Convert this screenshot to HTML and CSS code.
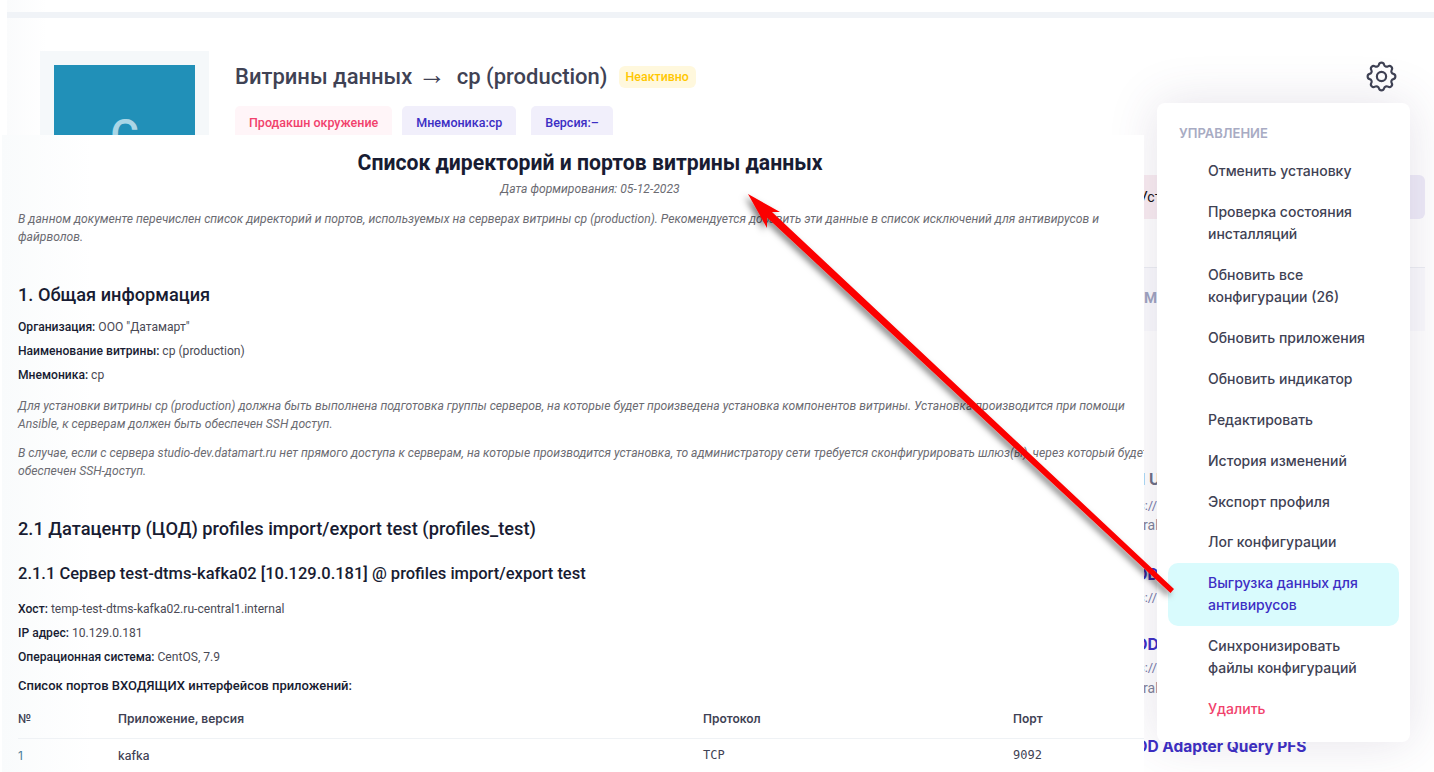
FILE: index.html
```html
<!DOCTYPE html>
<html lang="ru">
<head>
<meta charset="utf-8">
<title>Витрины данных</title>
<link rel="stylesheet" href="styles.css">
</head>
<body>
<div class="app">
  <div class="band"></div>
  <header class="hero">
    <div class="logo"><div class="logo-box">C</div></div>
    <div class="info">
      <div class="title-row">
        <h1 class="title">Витрины данных <span class="arrow-glyph">→</span>&nbsp; cp (production)</h1>
        <span class="badge">Неактивно</span>
      </div>
      <div class="chips">
        <span class="chip chip-red">Продакшн окружение</span>
        <span class="chip chip-blue">Мнемоника:cp</span>
        <span class="chip chip-blue chip-gap">Версия:–</span>
      </div>
      <div class="actions">
        <span class="action action-red">Установить</span>
        <span class="action action-purple"></span>
      </div>
    </div>
    <svg class="gear" viewBox="0 0 24 24" fill="none" stroke="#3f4254" stroke-width="1.4" stroke-linecap="round" stroke-linejoin="round">
      <path d="M10.325 4.317c.426-1.756 2.924-1.756 3.35 0a1.724 1.724 0 0 0 2.573 1.066c1.543-.94 3.31.826 2.37 2.37a1.724 1.724 0 0 0 1.065 2.572c1.756.426 1.756 2.924 0 3.35a1.724 1.724 0 0 0-1.066 2.573c.94 1.543-.826 3.31-2.37 2.37a1.724 1.724 0 0 0-2.572 1.065c-.426 1.756-2.924 1.756-3.35 0a1.724 1.724 0 0 0-2.573-1.066c-1.543.94-3.31-.826-2.37-2.37a1.724 1.724 0 0 0-1.065-2.572c-1.756-.426-1.756-2.924 0-3.35a1.724 1.724 0 0 0 1.066-2.573c-.94-1.543.826-3.31 2.37-2.37c1 .608 2.296.07 2.572-1.065z"/>
      <circle cx="12" cy="12" r="3"/>
    </svg>
  </header>
  <div class="tabs"><span class="tab">Мониторинг</span></div>
  <section class="services">
    <div class="service service-first">
      <div class="svc-name svc-dark">ADM UI</div>
      <div class="svc-url">https://studio-dev.datamart.ru</div>
      <div class="svc-host">central1.internal</div>
    </div>
    <div class="service service-second">
      <div class="svc-name">MOD Adapter</div>
      <div class="svc-url">https://studio-dev.datamart.ru</div>
    </div>
    <div class="service service-third">
      <div class="svc-name">MOD Adapter Kafka</div>
      <div class="svc-url">https://studio-dev.datamart.ru</div>
      <div class="svc-host">central1.internal</div>
    </div>
    <div class="service service-last">
      <div class="svc-name">MOD Adapter Query PFS</div>
    </div>
  </section>
</div>

<nav class="menu">
  <div class="menu-heading">УПРАВЛЕНИЕ</div>
  <a class="menu-item">Отменить установку</a>
  <a class="menu-item">Проверка состояния инсталляций</a>
  <a class="menu-item">Обновить все конфигурации (26)</a>
  <a class="menu-item">Обновить приложения</a>
  <a class="menu-item">Обновить индикатор</a>
  <a class="menu-item">Редактировать</a>
  <a class="menu-item">История изменений</a>
  <a class="menu-item">Экспорт профиля</a>
  <a class="menu-item">Лог конфигурации</a>
  <a class="menu-item menu-item-active">Выгрузка данных для антивирусов</a>
  <a class="menu-item">Синхронизировать файлы конфигураций</a>
  <a class="menu-item menu-item-danger">Удалить</a>
</nav>

<article class="doc">
  <h2 class="doc-title">Список директорий и портов витрины данных</h2>
  <p class="doc-date">Дата формирования: 05-12-2023</p>
  <p class="note note-intro">В данном документе перечислен список директорий и портов, используемых на серверах витрины cp (production). Рекомендуется добавить эти данные в список исключений для антивирусов и<br>файрволов.</p>
  <h3 class="h-section">1. Общая информация</h3>
  <p class="field field-first"><b>Организация:</b> ООО "Датамарт"</p>
  <p class="field"><b>Наименование витрины:</b> cp (production)</p>
  <p class="field"><b>Мнемоника:</b> cp</p>
  <p class="note note-a">Для установки витрины cp (production) должна быть выполнена подготовка группы серверов, на которые будет произведена установка компонентов витрины. Установка производится при помощи<br>Ansible, к серверам должен быть обеспечен SSH доступ.</p>
  <p class="note note-b">В случае, если с сервера studio-dev.datamart.ru нет прямого доступа к серверам, на которые производится установка, то администратору сети требуется сконфигурировать шлюз(ы), через который будет<br>обеспечен SSH-доступ.</p>
  <h3 class="h-dc">2.1 Датацентр (ЦОД) profiles import/export test (profiles_test)</h3>
  <h4 class="h-server">2.1.1 Сервер test-dtms-kafka02 [10.129.0.181] @ profiles import/export test</h4>
  <p class="field field-host"><b>Хост:</b> temp-test-dtms-kafka02.ru-central1.internal</p>
  <p class="field"><b>IP адрес:</b> 10.129.0.181</p>
  <p class="field"><b>Операционная система:</b> CentOS, 7.9</p>
  <p class="list-title">Список портов ВХОДЯЩИХ интерфейсов приложений:</p>
  <table class="ports">
    <thead>
      <tr><th class="col-n">№</th><th class="col-app">Приложение, версия</th><th class="col-proto">Протокол</th><th>Порт</th></tr>
    </thead>
    <tbody>
      <tr><td class="cell-n">1</td><td class="cell-app">kafka</td><td class="cell-mono">TCP</td><td class="cell-mono">9092</td></tr>
    </tbody>
  </table>
</article>

<svg class="pointer" viewBox="0 0 1434 772">
  <defs>
    <filter id="arrow-shadow" x="-10%" y="-10%" width="120%" height="120%">
      <feDropShadow dx="-3" dy="3" stdDeviation="3" flood-color="#000" flood-opacity=".5"/>
    </filter>
  </defs>
  <polygon filter="url(#arrow-shadow)" fill="#fb0000" points="748,194 780,212 772,212 1174,589 1170.5,593 767,217.5 767,228"/>
</svg>
</body>
</html>
```
FILE: styles.css
```css
* { box-sizing: border-box; }
html, body { margin: 0; padding: 0; }
body {
  position: relative;
  width: 1434px;
  height: 772px;
  overflow: hidden;
  background: #fff;
  font-family: Roboto, "Noto Sans", sans-serif;
}
h1, h2, h3, h4, p { margin: 0; }

/* base page */
.app {
  margin-left: 7px;
  padding-top: 12px;
  height: 772px;
  display: flex;
  flex-direction: column;
  background: linear-gradient(90deg, #fafbfc, #fff 40px);
}
.band { height: 6px; background: #f0f3f7; flex: none; }
.hero {
  display: flex;
  flex: none;
  height: 250px;
  padding: 33px 0 0 33px;
  margin-right: 9px;
  border-bottom: 1px solid #eceef3;
  position: relative;
}
.logo { width: 169px; height: 169px; padding: 14px; background: #f5f8fa; flex: none; }
.logo-box {
  width: 141px;
  height: 141px;
  background: #2190b8;
  color: #a9d6e6;
  font-size: 44px;
  font-weight: 500;
  display: flex;
  align-items: center;
  justify-content: center;
}
.info { margin-left: 26px; flex: 1; padding-top: 15px; }
.title-row { display: flex; align-items: center; height: 22px; }
.title { font-size: 22px; font-weight: 500; color: #3f4254; line-height: 28px; white-space: nowrap; }
.arrow-glyph { font-family: "Liberation Serif", serif; font-weight: 400; font-size: 28px; line-height: 22px; }
.badge {
  margin-left: 11px;
  height: 22px;
  padding: 0 7px;
  border-radius: 6px;
  background: #fff8dd;
  color: #ffc700;
  font-size: 12.4px;
  font-weight: 500;
  line-height: 22px;
}
.chips { display: flex; gap: 10px; margin-top: 18px; }
.chip {
  height: 34px;
  padding: 0 14px;
  border-radius: 5px;
  font-size: 12.5px;
  font-weight: 500;
  line-height: 34px;
}
.chip-red { background: #fff5f8; color: #f1416c; }
.chip-blue { background: #f1effb; color: #3c2ec4; }
.chip-gap { margin-left: 5px; }
.actions { display: flex; justify-content: flex-end; gap: 10px; margin-top: 35px; }
.action { height: 44px; border-radius: 6px; line-height: 44px; font-size: 14px; font-weight: 400; }
.action-red { background: #f9ecf1; color: #111; padding: 0 14px; width: 110px; }
.action-purple { background: #eeebf8; width: 180px; }
.gear { position: absolute; top: 40px; right: 25px; width: 37px; height: 37px; }
.tabs {
  flex: none;
  height: 63px;
  margin-right: 9px;
  padding: 18px 0 0 1137px;
  background: #fafafd;
}
.tab { font-size: 15px; font-weight: 700; color: #9ea3bf; line-height: 24px; }
.services { padding-left: 1114px; flex: 1; }
.svc-name { font-size: 15.5px; font-weight: 700; color: #3c2ec4; line-height: 24px; white-space: nowrap; font-family: Inter, sans-serif; }
.svc-dark { color: #6c6f85; margin-left: -13px; }
.svc-url { font-size: 13px; color: #7679a8; line-height: 21px; margin: 1px 0 0 -6px; white-space: nowrap; }
.svc-host { font-size: 14px; color: #7e8299; line-height: 21px; margin-left: -5px; white-space: nowrap; }
.service-first { margin-top: 137px; }
.service-first .svc-url { margin-top: 3px; }
.service-first .svc-host { margin-top: -1px; }
.service-second { margin-top: 27px; }
.service-second .svc-url { margin-top: 0; }
.service-third { margin-top: 25px; }
.service-third .svc-url { margin-top: 0; }
.service-last { margin-top: 36px; }

/* dropdown */
.menu {
  position: absolute;
  left: 1157px;
  top: 103px;
  width: 253px;
  height: 639px;
  padding: 0 11px;
  background: #fff;
  border-radius: 8px;
  box-shadow: 0 0 50px 0 rgba(82, 63, 105, .15);
  font-family: Inter, sans-serif;
  font-size: 14px;
  font-weight: 500;
  color: #3f4254;
}
.menu-heading {
  height: 48px;
  padding: 21px 0 0 11px;
  font-size: 13px;
  font-weight: 600;
  line-height: 18px;
  color: #a8abc3;
}
.menu-item {
  display: block;
  padding: 9.45px 20px 9.45px 40px;
  line-height: 22px;
  border-radius: 10px;
}
.menu-item-active { background: #d9fbfd; color: #3c2ec4; }
.menu-item-danger { color: #f1416c; }

/* report overlay */
.doc {
  position: absolute;
  left: 2px;
  top: 135px;
  width: 1142px;
  height: 637px;
  overflow: hidden;
  padding: 16px 0 0 16px;
  background: linear-gradient(90deg, #f9fbfc, #fff 90px);
  font-size: 12.1px;
  color: #4a4a55;
  white-space: nowrap;
}
.doc-title { margin-right: -18px; font-size: 21.2px; font-weight: 700; line-height: 24px; text-align: center; color: #181c32; }
.doc-date { margin: 5px -18px 0 0; font-size: 12.15px; font-style: italic; line-height: 18px; text-align: center; color: #6b6b72; }
.note { font-size: 12.165px; font-style: italic; line-height: 18px; color: #6b6b72; }
.note-intro { margin-top: 12px; }
.h-section { margin-top: 38px; font-size: 18.2px; font-weight: 500; line-height: 22px; color: #181c32; }
.field { margin-top: 6px; line-height: 18px; }
.field b { font-weight: 500; color: #181c32; }
.field-first { margin-top: 12px; }
.note-a { margin-top: 13px; }
.note-b { margin-top: 11px; }
.h-dc { margin-top: 38px; font-size: 18.25px; font-weight: 500; line-height: 22px; color: #181c32; }
.h-server { margin-top: 24px; font-size: 16.5px; font-weight: 500; line-height: 20px; color: #181c32; }
.field-host { margin-top: 16px; }
.list-title { margin-top: 11px; font-size: 13px; font-weight: 500; line-height: 18px; color: #181c32; }
.ports { margin-top: 5px; width: 1126px; border-collapse: collapse; table-layout: fixed; font-family: Inter, sans-serif; font-size: 12px; }
.ports th { height: 38px; padding: 0; text-align: left; font-weight: 600; color: #3f4254; border-bottom: 1px solid #eff2f5; }
.ports td { height: 34px; padding: 0; color: #3f4254; }
.col-n { width: 100px; }
.col-app { width: 585px; }
.col-proto { width: 310px; }
.cell-n { color: #4d7f99 !important; }
.cell-app { font-weight: 500; }
.cell-mono { font-family: "DejaVu Sans Mono", monospace; }

.pointer { position: absolute; left: 0; top: 0; width: 1434px; height: 772px; pointer-events: none; }
```
